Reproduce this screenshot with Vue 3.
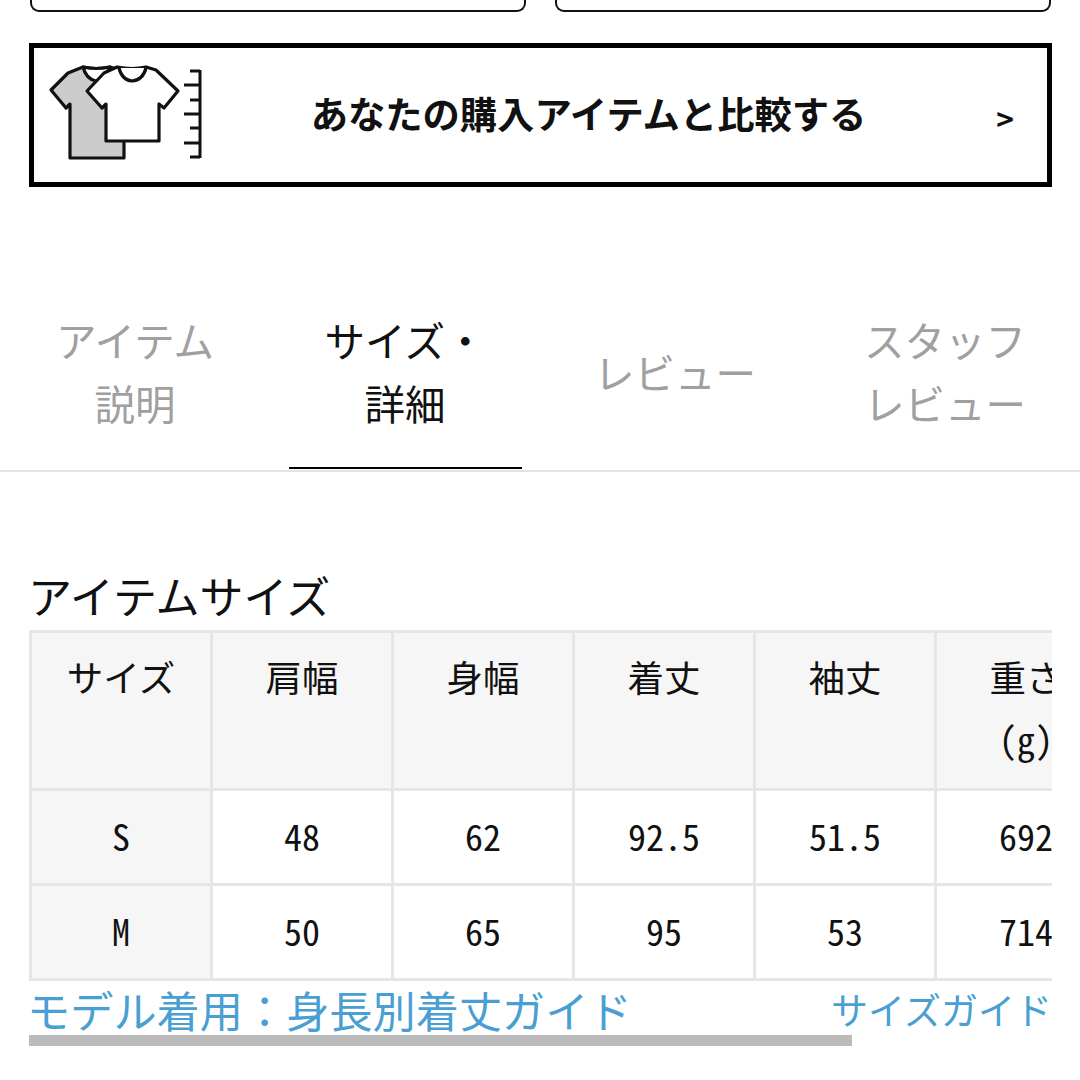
<script setup>
const columns = [
  ['サイズ'],
  ['肩幅'],
  ['身幅'],
  ['着丈'],
  ['袖丈'],
  ['重さ', '(g)']
]

const rows = [
  ['S', '48', '62', '92.5', '51.5', '692'],
  ['M', '50', '65', '95', '53', '714']
]

const tabs = [
  { label: ['アイテム', '説明'] },
  { label: ['サイズ・', '詳細'], active: true },
  { label: ['レビュー'] },
  { label: ['スタッフ', 'レビュー'] }
]

const ticks = [
  { y: 71, x: 190 },
  { y: 85, x: 184 },
  { y: 100, x: 190 },
  { y: 114, x: 184 },
  { y: 128, x: 190 },
  { y: 143, x: 184 },
  { y: 157, x: 190 }
]
</script>

<template>
  <div class="page">
    <div class="top-cards">
      <div class="top-card"></div>
      <div class="top-card"></div>
    </div>

    <div class="compare">
      <svg class="compare-icon" viewBox="48 62 156 100" width="156" height="100">
        <g stroke="#111" stroke-width="3.2" stroke-linejoin="round" stroke-linecap="round">
          <path fill="#ccc" d="M83 67 Q96 70 110 67 L119 70 L142 91 L124 108 L124 158 L70 158 L70 104 L66 108 L51 90 L68 73 Z" />
          <path fill="#fff" d="M83 67 Q96 70 110 67 Q106 79 96 81 Q86 79 83 67 Z" />
          <path fill="#fff" d="M117 67 Q132 70 146 67 L156 70 L178 91 L164 108 L159 104 L159 141 L106 141 L106 104 L102 108 L87 91 L104 73 Z" />
          <path fill="#fff" d="M119 68 Q122 80 132 81 Q143 80 146 68" />
        </g>
        <g stroke="#111" stroke-width="3" fill="none">
          <path d="M200 70 L200 158" />
          <path v-for="t in ticks" :key="t.y" :d="`M${t.x} ${t.y} L200 ${t.y}`" />
        </g>
      </svg>
      <span class="compare-text">あなたの購入アイテムと比較する</span>
      <span class="compare-arrow">&gt;</span>
    </div>

    <div class="tabs">
      <div
        v-for="(tab, i) in tabs"
        :key="i"
        class="tab"
        :class="{ active: tab.active }"
      >
        <div class="tab-text">
          <div v-for="line in tab.label" :key="line">{{ line }}</div>
        </div>
      </div>
    </div>

    <h2 class="section-title">アイテムサイズ</h2>

    <div class="table-wrap">
      <table class="size-table">
        <thead>
          <tr>
            <th v-for="(col, i) in columns" :key="i">
              <div v-for="line in col" :key="line">{{ line }}</div>
            </th>
          </tr>
        </thead>
        <tbody>
          <tr v-for="row in rows" :key="row[0]">
            <td v-for="(val, i) in row" :key="i" :class="{ first: i === 0 }">{{ val }}</td>
          </tr>
        </tbody>
      </table>
    </div>

    <div class="links">
      <span class="link-model">モデル着用：身長別着丈ガイド</span>
      <span class="link-guide">サイズガイド</span>
    </div>
    <div class="scrollbar"></div>
  </div>
</template>

<style scoped>
.page {
  width: 1080px;
  height: 1080px;
  overflow: hidden;
  background: #fff;
  color: #111;
  font-family: "Noto Sans CJK JP", "Noto Sans", sans-serif;
}

/* ── top cards ── */
.top-cards {
  display: flex;
  justify-content: space-between;
  padding: 0 29px 0 30px;
}

.top-card {
  width: 496px;
  height: 12px;
  border: 2px solid #111;
  border-top: 0;
  border-radius: 0 0 9px 9px;
  box-sizing: border-box;
}

/* ── compare ── */
.compare {
  margin: 31px 28px 0 29px;
  height: 144px;
  border: 5px solid #000;
  box-sizing: border-box;
  display: flex;
  align-items: center;
  position: relative;
}

.compare-icon {
  position: absolute;
  left: 14px;
  top: 14px;
}

.compare-text {
  flex: 1;
  text-align: center;
  padding-left: 96px;
  margin-top: -4px;
  font-size: 37.3px;
  font-weight: 700;
  color: #111;
}

.compare-arrow {
  position: absolute;
  right: 33px;
  top: 50px;
  font-size: 30px;
  line-height: 40px;
  font-weight: 700;
}

/* ── tabs ── */
.tabs {
  margin-top: 122px;
  display: grid;
  grid-template-columns: repeat(4, 270px);
  border-bottom: 2px solid #e2e2e2;
}

.tab {
  height: 161px;
  position: relative;
  display: flex;
  justify-content: center;
  padding-bottom: 37px;
  box-sizing: border-box;
  align-items: center;
  text-align: center;
  color: #a0a0a0;
  font-size: 40.5px;
  line-height: 63px;
}

.tab.active { color: #111; }

.tab.active::after {
  content: "";
  position: absolute;
  left: 19px;
  right: 18px;
  bottom: 1px;
  height: 2px;
  background: #000;
}

/* ── section title ── */
.section-title {
  margin: 90px 0 0 28px;
  font-size: 44px;
  font-weight: 400;
  line-height: 67px;
}

/* ── table ── */
.table-wrap {
  margin: 0 28px 0 29px;
  overflow: hidden;
}

.size-table {
  border-collapse: collapse;
  table-layout: fixed;
  width: 1086px;
  margin: 1px 0 0 0;
  font-feature-settings: "hwid";
}

.size-table th,
.size-table td {
  width: 181px;
  border: 3px solid #e6e6e6;
  text-align: center;
  box-sizing: border-box;
  padding: 0;
}

.size-table th {
  height: 158px;
  background: #f6f6f6;
  font-size: 36.5px;
  font-weight: 400;
  line-height: 62px;
  vertical-align: top;
  padding-top: 13px;
}

.size-table td {
  height: 95px;
  font-size: 36px;
  padding-bottom: 4px;
}

.size-table td.first { background: #f6f6f6; }

/* ── links ── */
.links {
  margin: 0 28px 0 27px;
  display: flex;
  justify-content: space-between;
  align-items: center;
  height: 54px;
  padding-top: 2px;
  box-sizing: border-box;
  color: #4a9fd2;
}

.link-model { font-size: 43.2px; }
.link-guide { font-size: 37px; }

.scrollbar {
  width: 823px;
  height: 11px;
  margin-left: 29px;
  background: #bbb;
}
</style>
